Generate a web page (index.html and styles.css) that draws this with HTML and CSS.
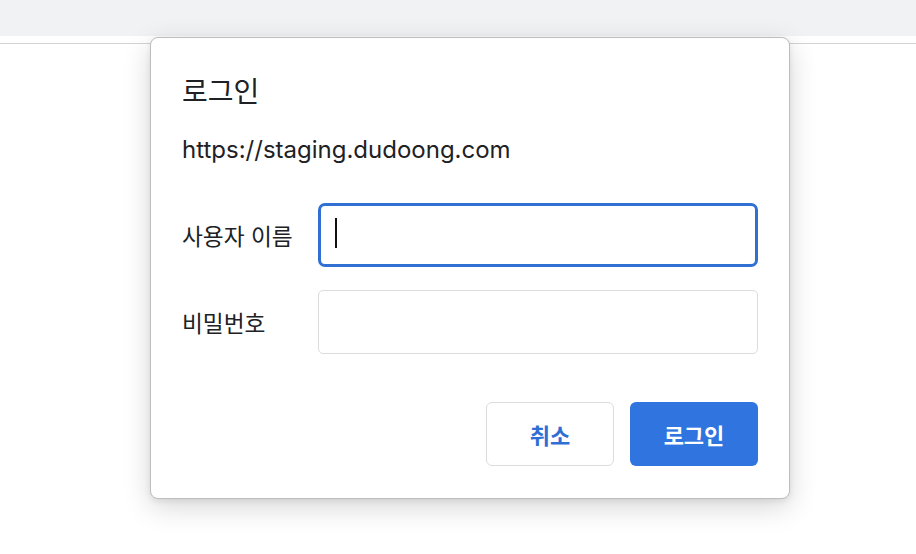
FILE: index.html
```html
<!DOCTYPE html>
<html lang="ko">
<head>
<meta charset="utf-8">
<title>로그인</title>
<link rel="stylesheet" href="styles.css">
</head>
<body>
<div class="toolbar"></div>
<div class="divider"></div>
<div class="dialog">
  <h1 class="title">로그인</h1>
  <p class="origin">https://staging.dudoong.com</p>
  <div class="form">
    <label class="label" for="user">사용자 이름</label>
    <div class="input focused" id="user"><span class="caret"></span></div>
    <label class="label" for="pw">비밀번호</label>
    <div class="input" id="pw"></div>
  </div>
  <div class="actions">
    <button class="btn secondary">취소</button>
    <button class="btn primary">로그인</button>
  </div>
</div>
</body>
</html>
```
FILE: styles.css
```css
html, body {
  margin: 0;
  padding: 0;
  width: 916px;
  height: 554px;
  overflow: hidden;
  background: #ffffff;
  font-family: "Inter", "Noto Sans CJK KR", sans-serif;
  color: #202124;
}
.toolbar {
  height: 36px;
  background: #f1f2f4;
}
.divider {
  margin-top: 7px;
  height: 1px;
  background: #d3d3d5;
}
.dialog {
  position: absolute;
  left: 150px;
  top: 37px;
  width: 640px;
  height: 462px;
  box-sizing: border-box;
  background: #fff;
  border: 1px solid #bdbdbd;
  border-radius: 8px;
  box-shadow: 0 8px 28px rgba(0,0,0,0.16), 0 2px 6px rgba(0,0,0,0.08);
  padding: 0 31px;
  display: flex;
  flex-direction: column;
}
.title {
  margin: 35px 0 0;
  font-size: 28px;
  font-weight: 400;
  line-height: 34px;
  font-family: "Noto Sans CJK KR", sans-serif;
}
.origin {
  margin: 28px 0 0;
  font-size: 24px;
  line-height: 30px;
}
.form {
  margin-top: 38px;
  display: grid;
  grid-template-columns: 136px 440px;
  row-gap: 23px;
  align-items: center;
}
.label {
  font-family: "Noto Sans CJK KR", sans-serif;
  font-size: 22.7px;
}
.input {
  height: 64px;
  box-sizing: border-box;
  border: 1px solid #dcdcdc;
  border-radius: 5px;
  background: #fff;
  position: relative;
}
.input.focused {
  border: 3px solid #3070d2;
  border-radius: 7px;
}
.caret {
  position: absolute;
  left: 14px;
  top: 12px;
  width: 2px;
  height: 30px;
  background: #111;
}
.actions {
  margin-top: 48px;
  display: flex;
  justify-content: flex-end;
  gap: 16px;
}
.btn {
  width: 128px;
  height: 64px;
  border-radius: 6px;
  font-family: "Noto Sans CJK KR", sans-serif;
  font-size: 22px;
  font-weight: 600;
  cursor: pointer;
  padding: 0;
}
.btn.secondary {
  background: #fff;
  border: 1px solid #dadce0;
  color: #2f6fd4;
}
.btn.primary {
  background: #2f74df;
  border: none;
  color: #fff;
}
```
